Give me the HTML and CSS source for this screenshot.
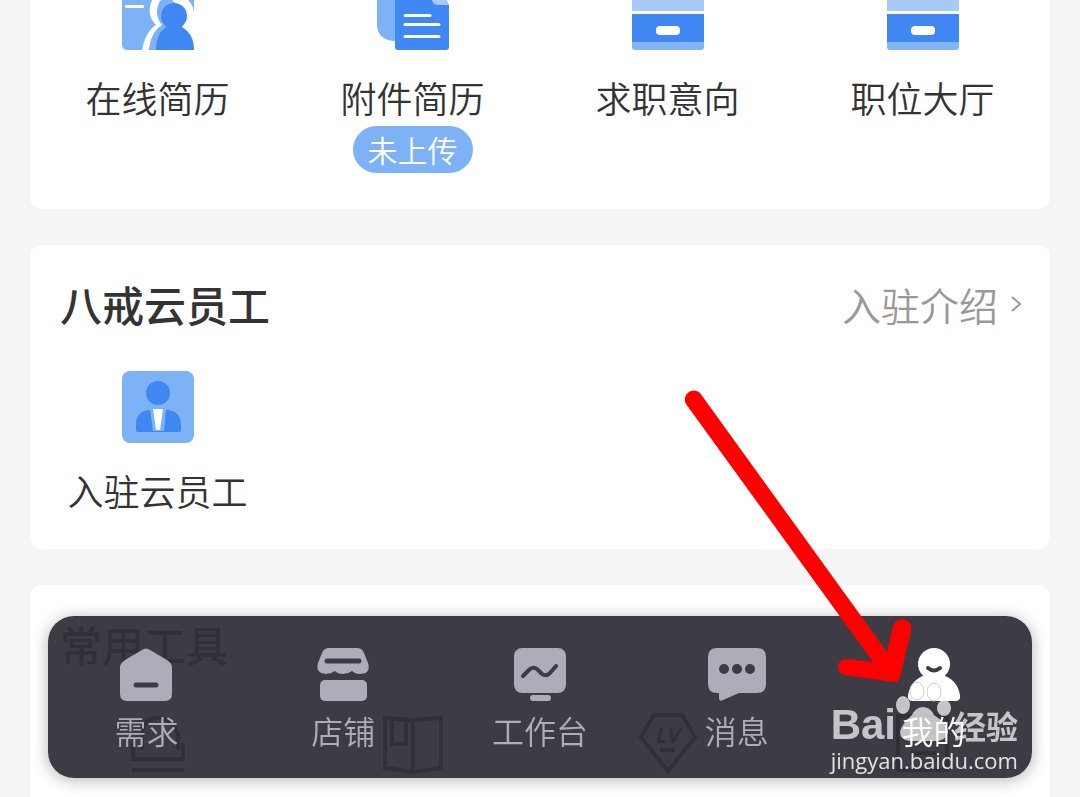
FILE: index.html
```
<!DOCTYPE html>
<html lang="zh-CN">
<head>
    <meta charset="UTF-8">
    <meta name="viewport" content="width=device-width, initial-scale=1.0">
    <title>我的</title>
    <link rel="stylesheet" href="styles.css">
</head>
<body>

    <main class="page">
        <section class="card card-first">
            <div class="grid">
                <a class="entry" href="#">
                    <svg class="entry-icon-cut" viewBox="0 0 72 50">
                        <path d="M0 0H72V50H6Q0 50 0 44Z" fill="#7db2f6"/>
                        <rect x="3" y="5" width="19" height="3" rx="1" fill="#fff"/>
                        <path d="M30 0C26 9 27 18 34 25C27 29 22 39 20 50H72V0Z" fill="#fff"/>
                        <path d="M39 0C33 7 34 18 40 25C32 30 28 39 27 50H60V10L50 0Z" fill="#7db2f6"/>
                        <path d="M66 0H72V12Q71 5 66 0Z" fill="#7db2f6"/>
                        <circle cx="52" cy="16" r="13" fill="#3f87f3"/>
                        <path d="M34 50C34 38 38 31 44 27H60Q72 34 72 50Z" fill="#3f87f3"/>
                    </svg>
                    <span class="entry-label">在线简历</span>
                </a>
                <a class="entry" href="#">
                    <svg class="entry-icon-cut" viewBox="0 0 72 50">
                        <path d="M0 0H24V41H16Q0 39 0 24Z" fill="#7db2f6"/>
                        <path d="M18 0H55L72 5V47Q72 50 69 50H21Q18 50 18 47Z" fill="#3f87f3"/>
                        <path d="M55 0H70L72 5H61Q56 5 55 0Z" fill="#a8cbfa"/>
                        <path d="M28 15.500H53M28 24.500H62M28 36.500H62" stroke="#fff" stroke-width="3" stroke-linecap="round"/>
                    </svg>
                    <span class="entry-label">附件简历</span>
                    <span class="badge">未上传</span>
                </a>
                <a class="entry" href="#">
                    <svg class="entry-icon-cut" viewBox="0 0 72 50">
                        <rect width="72" height="11" fill="#a7caf9"/>
                        <path d="M0 40H72V47Q72 50 69 50H3Q0 50 0 47Z" fill="#82b4f6"/>
                        <rect y="14" width="72" height="28" fill="#3f87f3"/>
                        <rect x="24" y="26" width="24" height="9" rx="4" fill="#fff"/>
                    </svg>
                    <span class="entry-label">求职意向</span>
                </a>
                <a class="entry" href="#">
                    <svg class="entry-icon-cut" viewBox="0 0 72 50">
                        <rect width="72" height="11" fill="#a7caf9"/>
                        <path d="M0 40H72V47Q72 50 69 50H3Q0 50 0 47Z" fill="#82b4f6"/>
                        <rect y="14" width="72" height="28" fill="#3f87f3"/>
                        <rect x="24" y="26" width="24" height="9" rx="4" fill="#fff"/>
                    </svg>
                    <span class="entry-label">职位大厅</span>
                </a>
            </div>
        </section>

        <section class="card card-cloud">
            <div class="card-head">
                <h2>八戒云员工</h2>
                <a class="more" href="#">入驻介绍
                    <svg class="chevron" viewBox="0 0 12 18">
                        <path d="M2 2L10 9L2 16" fill="none" stroke="#999" stroke-width="2"/>
                    </svg>
                </a>
            </div>
            <div class="grid">
                <a class="entry" href="#">
                    <svg class="entry-icon" viewBox="0 0 72 72">
                        <rect width="72" height="72" rx="8" fill="#7db2f6"/>
                        <circle cx="36" cy="22" r="12" fill="#3f87f3"/>
                        <path d="M14 59V52Q15 40 27 39H47Q58 41 59 52V59Q59 61 57 61H16Q14 61 14 59Z" fill="#3f87f3"/>
                        <path d="M28 38H44L42 60H31Z" fill="#7db2f6"/>
                        <path d="M31 38H41L38 59H34Z" fill="#fff"/>
                    </svg>
                    <span class="entry-label">入驻云员工</span>
                </a>
            </div>
        </section>

        <section class="card card-tools">
            <div class="card-head">
                <h2>常用工具</h2>
            </div>
            <div class="grid">
                <a class="entry" href="#">
                    <svg class="tool-icon" viewBox="0 0 60 64">
                        <path d="M5 31V47H55V31M14 38V24Q14 6 30 6Q46 6 50 24V38M4 58H56"/>
                    </svg>
                </a>
                <a class="entry" href="#">
                    <svg class="tool-icon" viewBox="0 0 60 64">
                        <path d="M2 6L30 8L58 6V56L30 60L2 56ZM30 8V60M9 7V32H23V8"/>
                    </svg>
                </a>
                <a class="entry" href="#">
                    <svg class="tool-icon" viewBox="0 0 60 64">
                        <path d="M16 3H44L57 25L30 59L3 25ZM22 38H37"/>
                        <text x="30" y="31" text-anchor="middle">LV</text>
                    </svg>
                </a>
                <a class="entry" href="#">
                    <svg class="tool-icon" viewBox="0 0 60 64">
                        <path d="M5 4H54V58H5ZM17 21H43M17 41H43"/>
                    </svg>
                </a>
            </div>
        </section>
    </main>

    <nav class="tabbar">
        <a class="tab" href="#">
            <svg viewBox="0 0 60 54">
                <path d="M26 2Q30 -1 34 2L51 12Q56 15 56 20V46Q56 53 49 53H11Q4 53 4 46V20Q4 15 9 12Z"/>
                <path class="line" d="M20 37H40"/>
            </svg>
            <span>需求</span>
        </a>
        <a class="tab" href="#">
            <svg viewBox="0 0 60 54">
                <path d="M16 0H44Q49 0 51 5L55 15Q58 26 47 26Q42 26 39 23Q35 26 30 26Q25 26 22 23Q18 26 13 26Q2 25 5 15L9 5Q11 0 16 0Z"/>
                <rect x="7" y="32" width="47" height="21" rx="5"/>
                <path class="line" d="M14 13H46"/>
            </svg>
            <span>店铺</span>
        </a>
        <a class="tab" href="#">
            <svg viewBox="0 0 60 54">
                <rect x="4" y="0" width="52" height="45" rx="8"/>
                <rect x="20" y="47" width="21" height="6" rx="3"/>
                <path class="line thin" d="M13 28L20 21Q24 18 28 22L32 26Q36 29 40 25L46 18"/>
            </svg>
            <span>工作台</span>
        </a>
        <a class="tab" href="#">
            <svg viewBox="0 0 60 54">
                <path d="M10 0H50Q59 0 59 9V36Q59 45 50 45H32L16 52Q12 54 12 50V45H10Q1 45 1 36V9Q1 0 10 0Z"/>
                <g class="dots">
                    <circle cx="17" cy="21" r="5"/>
                    <circle cx="30" cy="21" r="5"/>
                    <circle cx="43" cy="21" r="5"/>
                </g>
            </svg>
            <span>消息</span>
        </a>
        <a class="tab active" href="#">
            <svg viewBox="0 0 60 54">
                <circle cx="30" cy="16" r="16"/>
                <path d="M22 27H38Q53 31 56 47Q57 53 51 53H9Q3 53 4 47Q7 31 22 27Z"/>
                <path class="line thin" d="M24 20Q30 25 36 20"/>
            </svg>
            <span>我的</span>
        </a>
    </nav>

    <div class="watermark">
        <div class="brand">
            <span class="brand-bai">Bai</span>
            <svg class="paw" viewBox="0 0 56 62">
                <ellipse cx="21" cy="11" rx="7" ry="9" class="toe"/>
                <ellipse cx="38" cy="12" rx="7" ry="9" class="toe"/>
                <ellipse cx="7" cy="25" rx="7" ry="9"/>
                <ellipse cx="48" cy="28" rx="7" ry="8"/>
                <path d="M27 27Q34 27 38 35Q53 45 52 53Q49 61 40 61H14Q4 60 4 52Q5 45 16 35Q20 27 27 27Z"/>
            </svg>
            <span class="brand-cn">经验</span>
        </div>
        <span class="site">jingyan.baidu.com</span>
    </div>

    <svg class="arrow" viewBox="0 0 230 300">
        <path d="M2 14L189 272L163 269A8 8 0 0 0 161 285L210 292Q215 292 216 287L227 241A9 9 0 0 0 209 236L203 262L16 3A9 9 0 0 0 2 14Z"/>
    </svg>

</body>
</html>
```

FILE: styles.css
```
* {
    margin: 0;
    padding: 0;
    box-sizing: border-box;
}

body {
    height: 100vh;
    overflow: hidden;
    background: #f5f5f5;
    color: #333;
    font-family: "Noto Sans CJK SC", sans-serif;
    font-weight: 350;
}

a {
    color: inherit;
    text-decoration: none;
}

.page {
    display: flex;
    flex-direction: column;
    gap: 36px;
    padding: 0 30px;
}

.card {
    background: #fff;
    border-radius: 12px;
}

.card-first {
    border-radius: 0 0 12px 12px;
    padding-bottom: 36px;
}

.card-cloud {
    padding: 29px 0 32px;
}

.card-tools {
    padding: 29px 0 48px;
}

.card-head {
    display: flex;
    justify-content: space-between;
    align-items: center;
    padding: 0 28px 0 30px;
    line-height: 60px;
}

h2 {
    font-size: 42px;
    font-weight: 500;
}

.more {
    display: flex;
    align-items: center;
    gap: 12px;
    font-size: 39px;
    color: #999;
}

.chevron {
    width: 12px;
    height: 18px;
}

.grid {
    display: grid;
    grid-template-columns: repeat(4, 1fr);
}

.entry {
    display: flex;
    flex-direction: column;
    align-items: center;
}

.entry-icon-cut {
    width: 72px;
    height: 50px;
    margin-bottom: 20px;
}

.entry-icon {
    width: 72px;
    height: 72px;
    margin: 37px 0 20px;
}

.entry-label {
    font-size: 36px;
    line-height: 54px;
}

.badge {
    margin-top: 2px;
    padding: 0 15px;
    border-radius: 24px;
    background: #7db2f6;
    color: #fff;
    font-size: 30px;
    line-height: 47px;
}

.tool-icon {
    width: 60px;
    height: 64px;
    margin-top: 38px;
    fill: none;
    stroke: #333;
    stroke-width: 4;
}

.tool-icon text {
    fill: #333;
    stroke: none;
    font: italic bold 22px "Open Sans", sans-serif;
}

/* bottom tab bar */
.tabbar {
    position: fixed;
    left: 48px;
    right: 48px;
    bottom: 19px;
    display: flex;
    padding: 32px 0 24px;
    border-radius: 26px;
    background: rgba(49, 48, 57, 0.94);
    box-shadow: 0 2px 16px rgba(0, 0, 0, 0.3);
}

.tab {
    flex: 1;
    display: flex;
    flex-direction: column;
    align-items: center;
    gap: 4px;
    color: #adacb8;
    font-size: 32px;
    line-height: 48px;
}

.tab svg {
    width: 60px;
    height: 54px;
    fill: currentColor;
    overflow: visible;
}

.tab .line {
    fill: none;
    stroke: #3d3c45;
    stroke-width: 5;
    stroke-linecap: round;
    stroke-linejoin: round;
}

.tab .thin {
    stroke-width: 4;
}

.tab .dots {
    fill: #3d3c45;
}

.tab.active {
    color: #fff;
}

/* watermark over the bar */
.watermark {
    position: fixed;
    right: 60px;
    bottom: 19px;
    color: rgba(255, 255, 255, 0.7);
    pointer-events: none;
}

.brand {
    display: flex;
    align-items: flex-end;
    justify-content: flex-end;
    padding-right: 2px;
}

.brand-bai {
    font-family: "Liberation Sans", sans-serif;
    font-size: 42px;
    font-weight: bold;
    line-height: 34px;
}

.paw {
    width: 56px;
    height: 62px;
    margin-right: 2px;
    fill: currentColor;
}

.paw .toe {
    stroke: #ccc;
}

.brand-cn {
    font-size: 32px;
    font-weight: bold;
    line-height: 34px;
}

.site {
    display: block;
    color: rgba(255, 255, 255, 0.85);
    font-family: "Open Sans", sans-serif;
    font-size: 22px;
    font-weight: 500;
    line-height: 36px;
}

.arrow {
    position: fixed;
    right: 166px;
    bottom: 107px;
    width: 230px;
    height: 300px;
    fill: #f00;
    pointer-events: none;
}
```
